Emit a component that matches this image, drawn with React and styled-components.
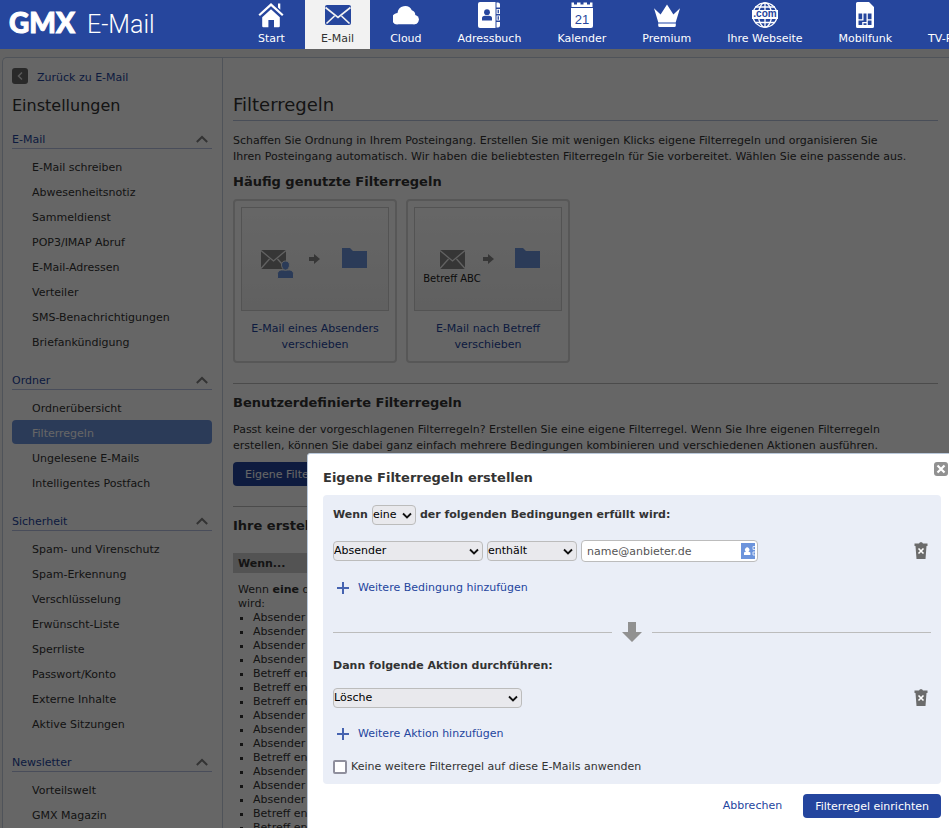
import React, { useState } from "react";
import styled, { createGlobalStyle } from "styled-components";

const GlobalStyle = createGlobalStyle`
  * {
    box-sizing: border-box;
  }
  body {
    margin: 0;
    background: #f8f8f8;
    color: #333;
    font-family: Verdana, "DejaVu Sans", sans-serif;
    font-size: 11px;
    line-height: 16px;
  }
  h1, h2, h3, p, ul {
    margin: 0;
    padding: 0;
    font-size: inherit;
    font-weight: inherit;
  }
  ul {
    list-style: none;
  }
  a {
    color: #24459e;
    text-decoration: none;
  }
  button, input, select {
    margin: 0;
    font: inherit;
  }
  svg {
    display: block;
    flex: none;
  }
`;

const Page = styled.div`
  display: flex;
  flex-direction: column;
  height: 100vh;
  overflow: hidden;
`;

/* ---------- top bar ---------- */

const TopBar = styled.header`
  position: relative;
  z-index: 20;
  display: flex;
  flex: none;
  height: 49px;
  overflow: hidden;
  background: #26469d;
  color: #fff;
`;

const Brand = styled.a`
  display: flex;
  flex: none;
  align-items: baseline;
  gap: 12px;
  width: 240px;
  padding: 3px 0 0 9px;
  color: #fff;
  line-height: 38px;
`;

const BrandMark = styled.span`
  font-family: Lato, sans-serif;
  font-size: 28px;
  font-weight: 900;
  -webkit-text-stroke: 1px #fff;
`;

const BrandName = styled.span`
  font-family: Roboto, sans-serif;
  font-size: 25px;
  font-weight: 300;
`;

const MainNav = styled.nav`
  display: flex;
`;

const NavItem = styled.a`
  display: flex;
  flex: none;
  flex-direction: column;
  align-items: center;
  gap: 4px;
  margin: 0 2px;
  padding: 2px 16px 0;
  background: ${(props) => (props.$active ? "#f2f2f2" : "transparent")};
  color: ${(props) => (props.$active ? "#333" : "#fff")};
  line-height: 14px;
  white-space: nowrap;
`;

/* ---------- page frame ---------- */

const Frame = styled.div`
  display: flex;
  flex: 1;
  min-height: 0;
  margin: 8px 0 0 2px;
  border: 1px solid #c5d0de;
  border-width: 1px 0 0 1px;
  border-radius: 5px 0 0 0;
  background: #fff;
`;

const Sidebar = styled.aside`
  flex: none;
  width: 220px;
  padding: 10px 10px 0 9px;
  border-right: 1px solid #c5d0de;
`;

const BackLink = styled.a`
  display: flex;
  align-items: flex-start;
  gap: 9px;
  line-height: 20px;
`;

const BackIcon = styled.span`
  display: grid;
  place-items: center;
  width: 16px;
  height: 16px;
  border-radius: 3px;
  background: #666;
`;

const SidebarTitle = styled.h2`
  margin: 7px 0 14px;
  font-size: 16px;
  line-height: 22px;
`;

const Group = styled.section`
  padding-bottom: 18px;
`;

const GroupToggle = styled.button`
  display: flex;
  justify-content: space-between;
  align-items: center;
  width: 100%;
  height: 18px;
  margin-bottom: 5px;
  padding: 0 4px 0 0;
  border: 0;
  border-bottom: 1px solid #b6c0e0;
  background: none;
  color: #24459e;
`;

const SideLink = styled.a`
  display: block;
  height: 24px;
  margin-bottom: 1px;
  padding-left: 20px;
  border-radius: 4px;
  background: ${(props) => (props.$active ? "#6c94dc" : "transparent")};
  color: ${(props) => (props.$active ? "#fff" : "#333")};
  line-height: 28px;
`;

const Main = styled.main`
  flex: 1;
  min-width: 0;
  padding: 36px 11px 0 10px;
`;

const Title = styled.h1`
  height: 27px;
  margin-bottom: 12px;
  border-bottom: 1px solid #b6c4dc;
  font-size: 18px;
  line-height: 22px;
`;

const Heading = styled.h2`
  font-size: 13px;
  font-weight: bold;
`;

const Intro = styled.p`
  margin-bottom: 9px;
`;

const CardRow = styled.div`
  display: flex;
  gap: 9px;
  margin: 9px 0 20px;
`;

const Card = styled.a`
  display: flex;
  flex-direction: column;
  gap: 10px;
  width: 164px;
  height: 164px;
  padding: 6px;
  border: 2px solid #d9d9d9;
  border-radius: 4px;
  text-align: center;
`;

const CardPicture = styled.span`
  display: flex;
  justify-content: center;
  height: 104px;
  border: 1px solid #d0d0d0;
  background: linear-gradient(#fff, #f0f0f0);
`;

const Divider = styled.hr`
  height: 1px;
  margin: 0 0 11px;
  border: 0;
  background: #bbb;
`;

const PrimaryButton = styled.button`
  height: 24px;
  padding: 1px 12px 0;
  border: 0;
  border-radius: 4px;
  background: #24459e;
  color: #fff;
  white-space: nowrap;
`;

const CustomRules = styled.section`
  margin-bottom: 20px;

  p {
    margin: 11px 0 8px;
  }
`;

const RuleTable = styled.table`
  width: 100%;
  margin-top: 19px;
  border-collapse: collapse;
  line-height: 14px;

  th {
    height: 20px;
    padding: 2px 5px 0;
    background: #d0d0d0;
    text-align: left;
  }
  td {
    padding: 10px 5px 0;
    vertical-align: top;
  }
`;

const ConditionList = styled.ul`
  list-style: square;
  padding-left: 15px;
`;

/* ---------- dialog ---------- */

const Overlay = styled.div`
  position: fixed;
  inset: 49px 0 0;
  z-index: 10;
  overflow: hidden;
  padding: 404px 0 0 307px;
  background: rgba(0, 0, 0, 0.6);
`;

const Dialog = styled.div`
  position: relative;
  margin-right: -8px;
  padding: 16px 15px;
  border: 1px solid #b9c8da;
  border-radius: 3px;
  background: #fff;
`;

const CloseButton = styled.button`
  position: absolute;
  top: 8px;
  right: 8px;
  padding: 0;
  border: 0;
  background: none;
`;

const RuleForm = styled.form`
  margin-top: 9px;
`;

const RulePanel = styled.div`
  padding: 10px 10px 9px;
  border-radius: 4px;
  background: #eaeef7;
`;

const Sentence = styled.div`
  display: flex;
  align-items: baseline;
  gap: 4px;
  font-weight: bold;
`;

const Row = styled.div`
  display: flex;
  align-items: center;
  gap: 4px;
  margin: ${(props) => props.$margin};
`;

const SelectBox = styled.span`
  display: grid;
  align-items: center;
  width: ${(props) => props.$width};
  font-weight: normal;

  select, svg {
    grid-area: 1 / 1;
  }
  select {
    appearance: none;
    width: 100%;
    height: 20px;
    padding: 0 14px 0 0;
    border: 1px solid #bcbcbc;
    border-radius: 4px;
    background: #e9e9ed;
    color: #000;
  }
  svg {
    justify-self: end;
    margin-right: 4px;
    pointer-events: none;
  }
`;

const AddressField = styled.span`
  display: flex;
  align-items: center;
  width: 177px;
  height: 22px;
  padding: 0 2px 0 5px;
  border: 1px solid #bcbcbc;
  border-radius: 4px;
  background: #fff;

  input {
    flex: 1;
    min-width: 0;
    padding: 1px 0 0;
    border: 0;
    outline: 0;
    background: none;
    color: #555;
  }
`;

const IconButton = styled.button`
  margin-left: ${(props) => (props.$push ? "auto" : "0")};
  padding: ${(props) => (props.$push ? "0 3px 0 0" : "0")};
  border: 0;
  background: none;
`;

const AddLink = styled.a`
  display: flex;
  align-items: center;
  gap: 9px;
  padding-left: 4px;
`;

const Then = styled.div`
  display: flex;
  align-items: center;
  gap: 10px;
  margin: 26px 0 16px;

  &::before,
  &::after {
    content: "";
    flex: 1;
    height: 1px;
    background: #bcbcbc;
  }
`;

const CheckLabel = styled.label`
  display: flex;
  align-items: center;
  gap: 4px;
  margin-top: 17px;

  input {
    appearance: none;
    width: 14px;
    height: 14px;
    border: 2px solid #8f8f9d;
    border-radius: 2px;
    background: #fff;
  }
  input:checked {
    background: #24459e;
  }
`;

const Footer = styled.div`
  display: flex;
  justify-content: flex-end;
  align-items: center;
  gap: 21px;
  margin-top: 10px;
`;

/* ---------- icons ---------- */

const HomeIcon = () => (
  <svg width="26" height="26" viewBox="0 0 26 26">
    <path d="M1.2 13.2 13 2.6l11.8 10.6" fill="none" stroke="#fff" strokeWidth="2.2" />
    <path d="M20 1.5h2.3v6.200L20 5.600zM13 7.300l8.800 8V24a1.200 1.200 0 0 1-1.200 1.200H16V18h-5.600v7.200H5.400A1.200 1.200 0 0 1 4.200 24v-8.700z" fill="#fff" />
  </svg>
);

const MailIcon = () => (
  <svg width="26" height="26" viewBox="0 0 26 26">
    <rect y="3" width="26" height="20" rx="2" fill="#26469d" />
    <path d="m0.5 5.5 12.5 10 12.5-10M1.5 21.5l8-7.5M24.5 21.5l-8-7.5" fill="none" stroke="#f2f2f2" strokeWidth="1.7" />
  </svg>
);

const CloudIcon = () => (
  <svg width="26" height="26" viewBox="0 0 26 26">
    <path d="M5.600 22.300A5.600 5.600 0 0 1 2 11.800c.7-.5 1.600-.8 2.500-.8A7.600 7.600 0 0 1 18.800 8.200a5 5 0 0 1 3.400 5.400 4.600 4.600 0 0 1-1.200 8.700z" fill="#fff" />
    <circle cx="21.200" cy="17.600" r="4.700" fill="#fff" />
  </svg>
);

const AddressIcon = () => (
  <svg width="22" height="26" viewBox="0 0 22 26">
    <path d="M2 0h15.500v26H2a2 2 0 0 1-2-2V2a2 2 0 0 1 2-2z" fill="#fff" />
    <path d="M18.500 0.500h1.500a2 2 0 0 1 2 2V5.500h-3.500zM18.500 7H22v5h-3.500zM18.500 13.500H22v5h-3.500zM18.500 20H22v3.500a2 2 0 0 1-2 2h-1.500z" fill="#fff" />
    <path d="M19.600 7.800h1.300v3.400h-1.300zM19.600 14.300h1.300v3.400h-1.300z" fill="#26469d" />
    <circle cx="9" cy="10.200" r="2.900" fill="#26469d" />
    <path d="M4 18.500v-2.500c0-1.500 1.600-2.300 3-2.300h4c1.400 0 3 .8 3 2.300v2.500z" fill="#26469d" />
  </svg>
);

const CalendarIcon = () => (
  <svg width="22" height="26" viewBox="0 0 22 26">
    <path d="M0.500 0.500H3V2.500h3v-2h3.500v2h3v-2H16v2h3v-2h2.500V5h-21z" fill="#fff" />
    <path d="M0 6h22v18a2 2 0 0 1-2 2H2a2 2 0 0 1-2-2z" fill="#fff" />
    <text x="11" y="22" textAnchor="middle" fontFamily="Liberation Sans, sans-serif" fontSize="13" fill="#26469d">21</text>
  </svg>
);

const CrownIcon = () => (
  <svg width="26" height="26" viewBox="0 0 26 26">
    <path d="M0 6.300l6.600 6.200L13 2.500l6.400 10L26 6.300 21.800 20H4.200z" fill="#fff" />
    <path d="M4.200 20h17.600v2H4.200z" fill="#8ea2d4" />
    <path d="M4.200 22h17.600v1.500a1.500 1.500 0 0 1-1.500 1.500H5.700a1.500 1.500 0 0 1-1.500-1.500z" fill="#fff" />
  </svg>
);

const DomainIcon = () => (
  <svg width="26" height="26" viewBox="0 0 26 26">
    <g fill="none" stroke="#fff" strokeWidth="1.300">
      <circle cx="13" cy="13" r="12.200" />
      <ellipse cx="13" cy="13" rx="6.500" ry="12.200" />
      <path d="M13 0.800v24.400M3 5h20M3 20.500h20" />
    </g>
    <rect y="8" width="26" height="9" fill="#fff" />
    <text x="13" y="15" textAnchor="middle" fontFamily="Liberation Sans, sans-serif" fontSize="10" fontWeight="bold" fill="#26469d">.com</text>
  </svg>
);

const SimIcon = () => (
  <svg width="18" height="26" viewBox="0 0 18 26">
    <path d="M1.500 0H13l5 5v19.500a1.500 1.500 0 0 1-1.500 1.500h-15A1.500 1.500 0 0 1 0 24.500v-23A1.500 1.500 0 0 1 1.500 0z" fill="#fff" />
    <path d="M2.500 11.500h3.700v5.700H2.500zM7.500 11.500h3v8.500H7.500zM11.800 11.500h3.700v5.700h-3.700zM2.500 18.500h5v1.500h-1.300v3H2.500zM7.500 21.300h3v1.700h-3zM11.800 18.500h3.700v4.500h-3.700z" fill="#26469d" />
  </svg>
);

const Chevron = () => (
  <svg width="12" height="10" viewBox="0 0 12 10">
    <path d="m0.800 7 5.200-5 5.200 5" fill="none" stroke="#808080" strokeWidth="2" />
  </svg>
);

const Envelope = ({ person }) => (
  <svg x={person ? 19 : 25} y="42" width="34" height="30" viewBox="0 0 34 30">
    <path d="M1 0h25v19H1z" fill="#888" />
    <path d="m1 0.500 12.500 10.500L26 0.500M1 18.500l8.500-9.500M26 18.500l-8.500-9.500" fill="none" stroke="#f4f4f4" strokeWidth="1.300" />
    {person && (
      <g fill="#6c94dc" stroke="#f4f4f4" strokeWidth="1">
        <path d="M17.500 28.500v-4.700c0-2.300 2-3.800 4-3.800h8c2 0 4 1.500 4 3.800v4.700z" />
        <path d="M21.500 15c0-2.400 1.700-4 4-4s4 1.600 4 4-1.700 5.200-4 5.200-4-2.800-4-5.200z" />
      </g>
    )}
  </svg>
);

const RulePicture = ({ person, caption }) => (
  <svg width="146" height="102" viewBox="1 0 146 102">
    <Envelope person={person} />
    <path d={person ? "M68 49h5v-3l6 5-6 5v-3h-5z" : "M69 49h5v-3l6 5-6 5v-3h-5z"} fill="#888" />
    <path d="M101 40h8l3 3h14v17h-25z" fill="#6c94dc" />
    {caption && (
      <text x="38" y="74" textAnchor="middle" fontSize="10" fill="#222">{caption}</text>
    )}
  </svg>
);

const SelectArrow = () => (
  <svg width="10" height="7" viewBox="0 0 10 7">
    <path d="m1 1.500 4 4 4-4" fill="none" stroke="#111" strokeWidth="1.800" />
  </svg>
);

const ContactIcon = () => (
  <svg width="14" height="16" viewBox="0 0 14 16">
    <path d="M0 0h14v16H0z" fill="#6c94dc" />
    <path d="M3 12V9.500L5 8.500a2.200 2.200 0 1 1 2.400 0l2 1V12z" fill="#fff" />
    <path d="M14 3.500h-2v3h2M14 9h-2v3h2" fill="none" stroke="#dfe7f6" />
  </svg>
);

const TrashIcon = () => (
  <svg width="14" height="18" viewBox="0 0 14 18">
    <path d="M0.500 1.500h4.500L6 0.300h2L9 1.500h4.500v2.500h-1l-1 13h-9l-1-13h-1z" fill="#6b6b6b" />
    <path d="m4.500 6.500 5 5m0-5-5 5" stroke="#fff" strokeWidth="1.600" />
  </svg>
);

const PlusIcon = () => (
  <svg width="12" height="12" viewBox="0 0 12 12">
    <path d="M6 0v12M0 6h12" stroke="#4663b0" strokeWidth="2" />
  </svg>
);

const ArrowDown = () => (
  <svg width="20" height="20" viewBox="0 0 20 20">
    <path d="M6 0h8v10h6L10 20 0 10h6z" fill="#919191" />
  </svg>
);

const CloseIcon = () => (
  <svg width="14" height="14" viewBox="0 0 14 14">
    <rect width="14" height="14" rx="3" fill="#919191" />
    <path d="m3.500 3.500 7 7m0-7-7 7" stroke="#fff" strokeWidth="2.200" />
  </svg>
);

/* ---------- data ---------- */

const NAV = [
  { label: "Start", icon: HomeIcon },
  { label: "E-Mail", icon: MailIcon, active: true },
  { label: "Cloud", icon: CloudIcon },
  { label: "Adressbuch", icon: AddressIcon },
  { label: "Kalender", icon: CalendarIcon },
  { label: "Premium", icon: CrownIcon },
  { label: "Ihre Webseite", icon: DomainIcon },
  { label: "Mobilfunk", icon: SimIcon },
];

const GROUPS = [
  {
    title: "E-Mail",
    items: [
      "E-Mail schreiben",
      "Abwesenheitsnotiz",
      "Sammeldienst",
      "POP3/IMAP Abruf",
      "E-Mail-Adressen",
      "Verteiler",
      "SMS-Benachrichtigungen",
      "Briefankündigung",
    ],
  },
  {
    title: "Ordner",
    items: ["Ordnerübersicht", "Filterregeln", "Ungelesene E-Mails", "Intelligentes Postfach"],
  },
  {
    title: "Sicherheit",
    items: [
      "Spam- und Virenschutz",
      "Spam-Erkennung",
      "Verschlüsselung",
      "Erwünscht-Liste",
      "Sperrliste",
      "Passwort/Konto",
      "Externe Inhalte",
      "Aktive Sitzungen",
    ],
  },
  { title: "Newsletter", items: ["Vorteilswelt", "GMX Magazin"] },
];

// A = Absender, B = Betreff
const CONDITIONS = "AAAABBBAAABAAABB".split("");

const Select = ({ label, width, options }) => (
  <SelectBox $width={width}>
    <select aria-label={label}>
      {options.map((option) => (
        <option key={option}>{option}</option>
      ))}
    </select>
    <SelectArrow />
  </SelectBox>
);

const SideGroup = ({ title, items }) => {
  const [open, setOpen] = useState(true);

  return (
    <Group>
      <GroupToggle type="button" aria-expanded={open} onClick={() => setOpen(!open)}>
        {title}
        <Chevron />
      </GroupToggle>
      {open &&
        items.map((item) => (
          <SideLink key={item} href="#" $active={item === "Filterregeln"}>
            {item}
          </SideLink>
        ))}
    </Group>
  );
};

const RuleDialog = ({ onClose }) => (
  <Overlay>
    <Dialog role="dialog" aria-labelledby="dialog-title">
      <Heading id="dialog-title">Eigene Filterregeln erstellen</Heading>
      <CloseButton type="button" aria-label="Schließen" onClick={onClose}>
        <CloseIcon />
      </CloseButton>
      <RuleForm onSubmit={(e) => e.preventDefault()}>
        <RulePanel>
          <Sentence>
            Wenn
            <Select label="Verknüpfung" width="44px" options={["eine", "alle"]} />
            der folgenden Bedingungen erfüllt wird:
          </Sentence>
          <Row $margin="15px 0 18px">
            <Select label="Feld" width="150px" options={["Absender", "Betreff"]} />
            <Select label="Vergleich" width="90px" options={["enthält", "enthält nicht"]} />
            <AddressField>
              <input type="text" aria-label="E-Mail-Adresse" defaultValue="name@anbieter.de" />
              <IconButton type="button" aria-label="Adressbuch">
                <ContactIcon />
              </IconButton>
            </AddressField>
            <IconButton type="button" aria-label="Bedingung löschen" $push>
              <TrashIcon />
            </IconButton>
          </Row>
          <AddLink href="#">
            <PlusIcon />
            Weitere Bedingung hinzufügen
          </AddLink>
          <Then>
            <ArrowDown />
          </Then>
          <Sentence>Dann folgende Aktion durchführen:</Sentence>
          <Row $margin="14px 0 18px">
            <Select label="Aktion" width="189px" options={["Lösche", "Verschiebe"]} />
            <IconButton type="button" aria-label="Aktion löschen" $push>
              <TrashIcon />
            </IconButton>
          </Row>
          <AddLink href="#">
            <PlusIcon />
            Weitere Aktion hinzufügen
          </AddLink>
          <CheckLabel>
            <input type="checkbox" />
            Keine weitere Filterregel auf diese E-Mails anwenden
          </CheckLabel>
        </RulePanel>
        <Footer>
          <a href="#">Abbrechen</a>
          <PrimaryButton type="submit">Filterregel einrichten</PrimaryButton>
        </Footer>
      </RuleForm>
    </Dialog>
  </Overlay>
);

const App = () => {
  const [dialogOpen, setDialogOpen] = useState(true);

  return (
    <Page>
      <GlobalStyle />
      <TopBar>
        <Brand href="#">
          <BrandMark>GMX</BrandMark>
          <BrandName>E-Mail</BrandName>
        </Brand>
        <MainNav>
          {NAV.map(({ label, icon: Icon, active }) => (
            <NavItem key={label} href="#" $active={active}>
              <Icon />
              {label}
            </NavItem>
          ))}
          <NavItem href="#">
            <svg width="26" height="26" />
            TV-Programm
          </NavItem>
        </MainNav>
      </TopBar>
      <Frame>
        <Sidebar>
          <BackLink href="#">
            <BackIcon>
              <svg width="6" height="8" viewBox="0 0 6 8">
                <path d="M5 0.500 1.500 4 5 7.500" fill="none" stroke="#ddd" strokeWidth="1.500" />
              </svg>
            </BackIcon>
            Zurück zu E-Mail
          </BackLink>
          <SidebarTitle>Einstellungen</SidebarTitle>
          {GROUPS.map((group) => (
            <SideGroup key={group.title} {...group} />
          ))}
        </Sidebar>
        <Main>
          <Title>Filterregeln</Title>
          <Intro>
            Schaffen Sie Ordnung in Ihrem Posteingang. Erstellen Sie mit wenigen Klicks eigene
            Filterregeln und organisieren Sie
            <br />
            Ihren Posteingang automatisch. Wir haben die beliebtesten Filterregeln für Sie
            vorbereitet. Wählen Sie eine passende aus.
          </Intro>
          <Heading>Häufig genutzte Filterregeln</Heading>
          <CardRow>
            <Card href="#">
              <CardPicture>
                <RulePicture person />
              </CardPicture>
              E-Mail eines Absenders verschieben
            </Card>
            <Card href="#">
              <CardPicture>
                <RulePicture caption="Betreff ABC" />
              </CardPicture>
              E-Mail nach Betreff verschieben
            </Card>
          </CardRow>
          <Divider />
          <CustomRules>
            <Heading>Benutzerdefinierte Filterregeln</Heading>
            <p>
              Passt keine der vorgeschlagenen Filterregeln? Erstellen Sie eine eigene Filterregel.
              Wenn Sie Ihre eigenen Filterregeln
              <br />
              erstellen, können Sie dabei ganz einfach mehrere Bedingungen kombinieren und
              verschiedenen Aktionen ausführen.
            </p>
            <PrimaryButton type="button" onClick={() => setDialogOpen(true)}>
              Eigene Filterregel erstellen
            </PrimaryButton>
          </CustomRules>
          <Divider />
          <Heading>Ihre erstellten Filterregeln</Heading>
          <RuleTable>
            <thead>
              <tr>
                <th>Wenn...</th>
                <th>Dann...</th>
              </tr>
            </thead>
            <tbody>
              <tr>
                <td>
                  Wenn <b>eine</b> der folgenden Bedingungen erfüllt
                  <br />
                  wird:
                  <ConditionList>
                    {CONDITIONS.map((kind, i) => (
                      <li key={i}>{kind === "A" ? "Absender" : "Betreff"} enthält</li>
                    ))}
                  </ConditionList>
                </td>
                <td>Lösche</td>
              </tr>
            </tbody>
          </RuleTable>
        </Main>
      </Frame>
      {dialogOpen && <RuleDialog onClose={() => setDialogOpen(false)} />}
    </Page>
  );
};

export default App;
